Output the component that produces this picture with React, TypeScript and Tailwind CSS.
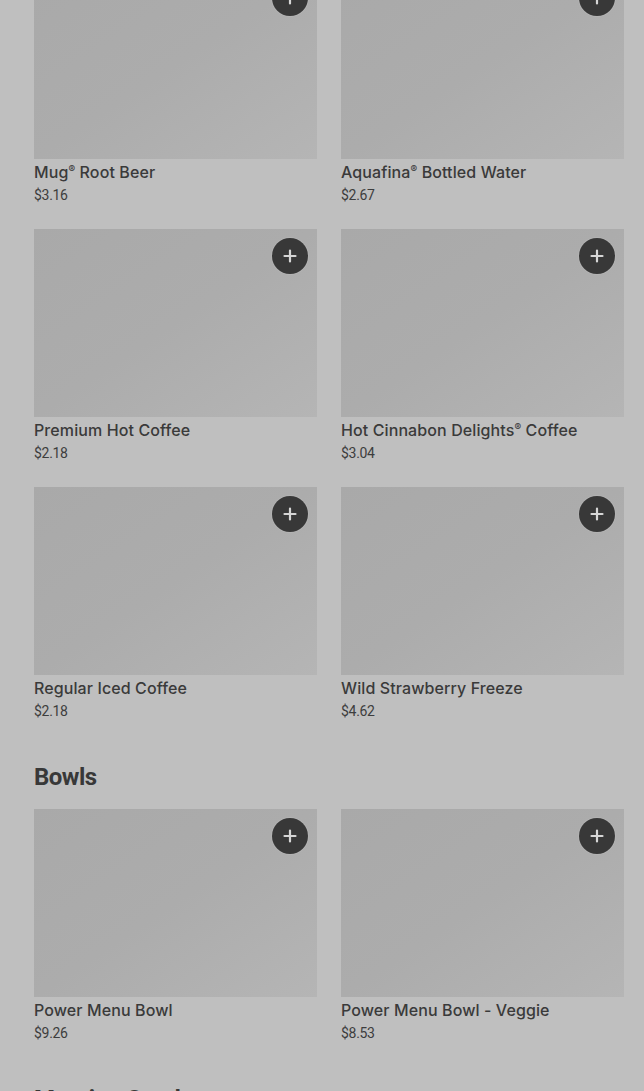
type Item = { name: string; price: string }

const drinks: Item[] = [
  { name: 'Mug® Root Beer', price: '$3.16' },
  { name: 'Aquafina® Bottled Water', price: '$2.67' },
  { name: 'Premium Hot Coffee', price: '$2.18' },
  { name: 'Hot Cinnabon Delights® Coffee', price: '$3.04' },
  { name: 'Regular Iced Coffee', price: '$2.18' },
  { name: 'Wild Strawberry Freeze', price: '$4.62' },
]

const bowls: Item[] = [
  { name: 'Power Menu Bowl', price: '$9.26' },
  { name: 'Power Menu Bowl - Veggie', price: '$8.53' },
]

// render the ® as a small raised mark like the menu font does
function Name({ text }: { text: string }) {
  const parts = text.split('®')
  return (
    <>
      {parts.map((part, i) => (
        <span key={i}>
          {part}
          {i < parts.length - 1 ? (
            <span className="relative top-[-5px] text-[10px] leading-[0]">®</span>
          ) : null}
        </span>
      ))}
    </>
  )
}

function ItemCard({ item }: { item: Item }) {
  return (
    <div>
      <div className="relative h-[188px] bg-gradient-to-br from-[#a9a9a9] via-[#acacac] to-[#b5b5b5]">
        <button
          type="button"
          className="absolute right-[9px] top-[9px] flex h-9 w-9 items-center justify-center rounded-full bg-[#383838] shadow-[0_0_0_1px_rgba(255,255,255,0.08)]"
        >
          <svg width="14" height="14" viewBox="0 0 14 14" fill="none">
            <path d="M7 1.5v11M1.5 7h11" stroke="#d6d6d6" strokeWidth="2.2" strokeLinecap="round" />
          </svg>
        </button>
      </div>
      <p
        className="mt-[2px] h-[22px] text-[16px] font-medium leading-[22px] tracking-[0.1px] text-[#3a3a3a]"
        style={{ fontFamily: 'Inter, "Liberation Sans", sans-serif' }}
      >
        <Name text={item.name} />
      </p>
      <p className="mt-[2px] text-[14px] leading-[20px] tracking-[-0.3px] text-[#3d3d3d]">{item.price}</p>
    </div>
  )
}

function Grid({ items }: { items: Item[] }) {
  return (
    <div className="grid grid-cols-[283px_283px] gap-x-6 gap-y-6">
      {items.map((item) => (
        <ItemCard key={item.name} item={item} />
      ))}
    </div>
  )
}

export default function App() {
  return (
    <div
      className="h-[1091px] overflow-hidden bg-[#bfbfbf] pl-[34px] pr-[20px]"
      style={{ fontFamily: 'Roboto, "Liberation Sans", sans-serif' }}
    >
      <div className="mt-[-29px]">
        <Grid items={drinks} />

        <h2 className="mb-4 mt-10 text-[24px] font-bold leading-[32px] tracking-[-0.5px] text-[#383838]">Bowls</h2>
        <Grid items={bowls} />

        <h2 className="mb-4 mt-10 text-[24px] font-bold leading-[32px] tracking-[-0.5px] text-[#383838]">
          Morning Combos
        </h2>
      </div>
    </div>
  )
}
